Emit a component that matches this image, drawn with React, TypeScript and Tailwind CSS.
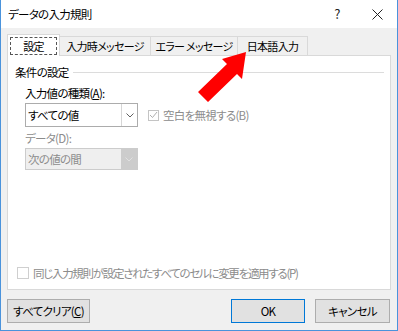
import React from "react";

function Chevron({ color }: { color: string }) {
  return (
    <svg width="8" height="5" viewBox="0 0 8 5">
      <polyline points="0.5,0.5 4,4 7.5,0.5" fill="none" stroke={color} strokeWidth="1" />
    </svg>
  );
}

export default function App() {
  return (
    <div className="relative w-[398px] h-[331px] border-x border-b border-[#4a93dc] bg-white flex flex-col text-[11.5px] leading-[16px] tracking-[-0.7px] whitespace-nowrap text-black font-['Noto_Sans_CJK_JP','Noto_Sans',sans-serif] [font-feature-settings:'palt'_1]">
      {/* title bar */}
      <div className="h-[28px] flex items-center pl-[7px] bg-white shrink-0">
        <span className="flex-1">データの入力規則</span>
        <span className="w-[20px] text-center mr-[25px] text-[13px] text-[#222]">?</span>
        <svg width="11" height="11" viewBox="0 0 11 11" className="mr-[14px]">
          <path d="M0.5 0.5 L10.5 10.5 M10.5 0.5 L0.5 10.5" stroke="#222" strokeWidth="1" />
        </svg>
      </div>

      {/* body */}
      <div className="flex-1 bg-[#f0f0f0] flex flex-col px-[6px] pt-[6px]">
        {/* tabs */}
        <div className="flex items-end h-[22px] relative z-10 -mb-[1px] text-[11px]">
          <div className="w-[53px] h-[22px] bg-white border-x border-t border-[#d9d9d9] flex items-center justify-center px-[2px] pt-[2px] pb-[1px]">
            <div className="w-full h-full border border-dashed border-[#555] flex items-center justify-center">設定</div>
          </div>
          <div className="w-[91px] h-[20px] bg-[#f0f0f0] border-t border-r border-b border-[#d9d9d9] flex items-center justify-center">入力時メッセージ</div>
          <div className="w-[87px] h-[20px] bg-[#f0f0f0] border-t border-r border-b border-[#d9d9d9] flex items-center justify-center">エラー メッセージ</div>
          <div className="w-[70px] h-[20px] bg-[#f0f0f0] border-t border-r border-b border-[#d9d9d9] flex items-center justify-center">日本語入力</div>
        </div>

        {/* panel */}
        <div className="h-[235px] w-[384px] bg-white border border-[#d9d9d9] flex flex-col pl-[7px]">
          <div className="mt-[8px] flex items-center pr-[6px]">
            <span>条件の設定</span>
            <div className="flex-1 h-px bg-[#dcdcdc] ml-[4px] mt-[1px]" />
          </div>
          <div className="pl-[10px] flex flex-col">
            <div className="mt-[5px]">
              入力値の種類(<span className="underline">A</span>):
            </div>
            <div className="mt-[2px] flex items-center">
              <div className="w-[113px] h-[24px] bg-white border border-[#acacac] flex items-stretch">
                <div className="flex-1 flex items-center pl-[2px]">すべての値</div>
                <div className="w-[16px] border-l border-[#d6d6d6] flex items-center justify-center">
                  <Chevron color="#606060" />
                </div>
              </div>
              <div className="ml-[10px] flex items-center text-[#8c8c8c]">
                <div className="w-[11px] h-[11px] border border-[#c4c4c4] flex items-center justify-center">
                  <svg width="9" height="8" viewBox="0 0 9 8">
                    <polyline points="1,4 3.5,6.5 8,1" fill="none" stroke="#b0b0b0" strokeWidth="1" />
                  </svg>
                </div>
                <span className="ml-[4px]">空白を無視する(B)</span>
              </div>
            </div>
            <div className="mt-[3px] text-[#8c8c8c]">データ(D):</div>
            <div className="mt-[2px] w-[113px] h-[22px] bg-[#efefef] border border-[#cccccc] flex items-stretch text-[#8c8c8c]">
              <div className="flex-1 flex items-center pl-[2px]">次の値の間</div>
              <div className="w-[16px] bg-[#cccccc] flex items-center justify-center">
                <Chevron color="#e0e0e0" />
              </div>
            </div>
          </div>
          <div className="mt-auto mb-[8px] flex items-center text-[#8c8c8c] pl-[2px]">
            <div className="w-[12px] h-[12px] border border-[#cfcfcf] bg-white" />
            <span className="ml-[4px] tracking-[-1.3px]">同じ入力規則が設定されたすべてのセルに変更を適用する(P)</span>
          </div>
        </div>

        {/* footer */}
        <div className="mt-[9px] flex items-center">
          <button className="w-[83px] h-[24px] bg-[#e1e1e1] border border-[#adadad] flex items-center justify-center">
            すべてクリア(<span className="underline">C</span>)
          </button>
          <div className="flex-1" />
          <button className="w-[74px] h-[24px] bg-[#e1e1e1] border border-[#0078d7] flex items-center justify-center">OK</button>
          <button className="ml-[10px] w-[75px] h-[24px] bg-[#e1e1e1] border border-[#adadad] flex items-center justify-center mr-[1px]">キャンセル</button>
        </div>
      </div>

      {/* red arrow */}
      <svg className="absolute left-0 top-0 pointer-events-none z-20" width="398" height="331" viewBox="0 0 398 331">
        <polygon
          points="197,92 207,102 236,74 241,79 245,52 221,59 226,64"
          fill="#ff0000"
        />
      </svg>
    </div>
  );
}
